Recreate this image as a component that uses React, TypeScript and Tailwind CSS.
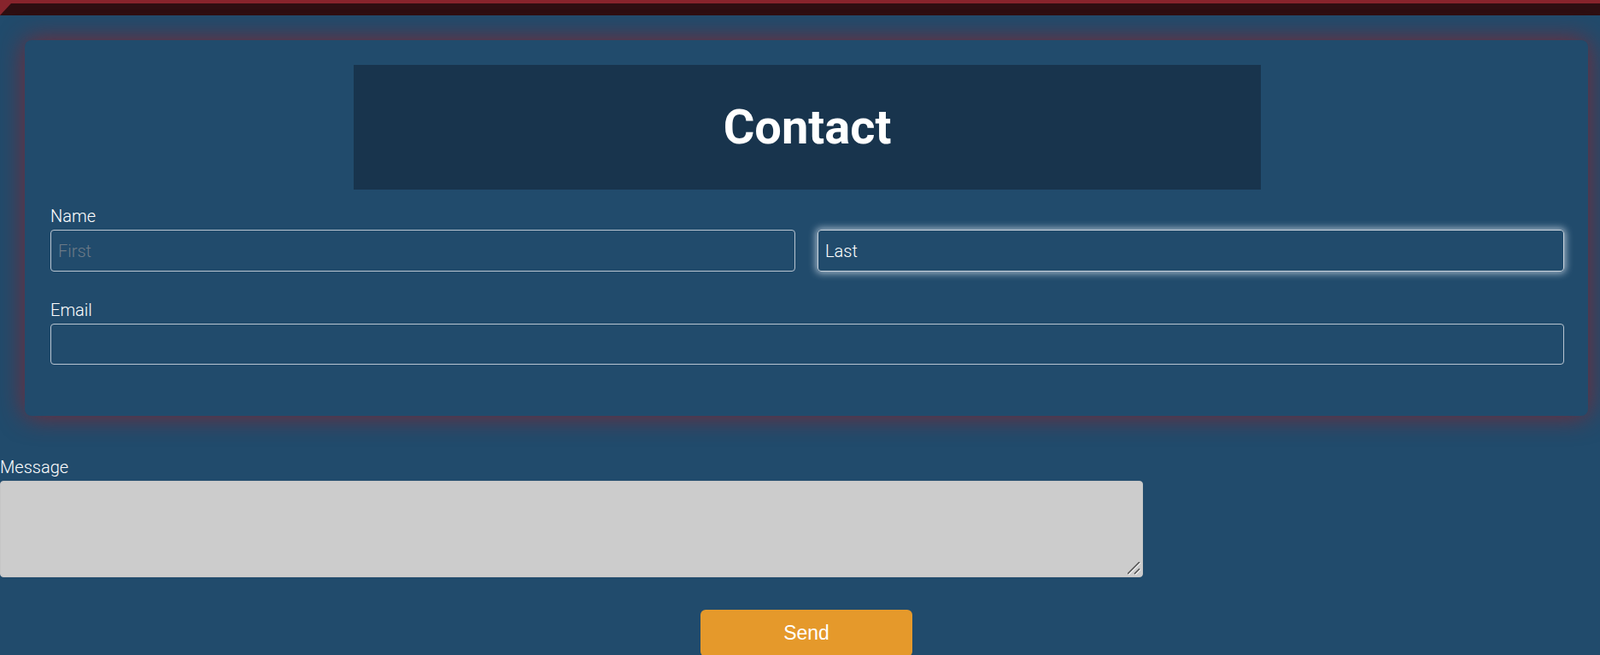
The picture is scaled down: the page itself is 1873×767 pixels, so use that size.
import React from "react";

export default function App() {
  return (
    <div
      className="min-h-[767px] w-full bg-[#214b6c] overflow-hidden"
      style={{ fontFamily: "Roboto, 'Liberation Sans', sans-serif" }}
    >
      {/* top bar */}
      <div className="h-0 w-full box-content border-t-[4px] border-l-[13px] border-b-[14px] border-solid border-t-[#87242c] border-l-[#87242c] border-b-[#2e0e11]" />

      {/* card */}
      <div className="ml-[29px] mr-[14px] mt-[29px] rounded-[8px] bg-[#214b6c] pl-[30px] pr-[28px] pt-[29px] pb-[60px] shadow-[0_0_30px_rgba(135,36,44,0.9)]">
        <div className="mx-auto flex h-[146px] w-[1062px] items-center justify-center bg-[#18344d]">
          <h1 className="text-[56px] font-bold leading-none text-white">Contact</h1>
        </div>

        <div className="mt-[20px]">
          <label className="block text-[20px] font-light leading-[23px] text-white">Name</label>
          <div className="mt-[4px] grid grid-cols-[872px_1fr] gap-[26px]">
            <input
              className="h-[49px] w-full rounded-[4px] border border-[#b9c5d1] bg-transparent px-[8px] text-[20px] font-light text-white outline-none placeholder:text-[#6c7a87]"
              placeholder="First"
            />
            <input
              className="h-[49px] w-full rounded-[4px] border border-[#c9d3dc] bg-transparent px-[8px] text-[20px] font-light text-white outline-none shadow-[0_0_8px_2px_rgba(220,230,240,0.7)]"
              defaultValue="Last"
            />
          </div>
        </div>

        <div className="mt-[34px]">
          <label className="block text-[20px] font-light leading-[23px] text-white">Email</label>
          <input className="mt-[4px] h-[48px] w-full rounded-[4px] border border-[#b9c5d1] bg-transparent px-[8px] text-[20px] font-light text-white outline-none" />
        </div>
      </div>

      {/* message */}
      <div className="mt-[49px]">
        <label className="block text-[20px] font-light leading-[23px] text-white">Message</label>
        <div className="relative mt-[4px] w-[1338px]">
          <textarea className="block h-[113px] w-full resize-none rounded-[4px] border border-[#c6c6c6] bg-[#cccccc] p-[8px] text-[18px] text-black outline-none" />
          <svg
            className="pointer-events-none absolute bottom-[2px] right-[2px]"
            width="16"
            height="16"
            viewBox="0 0 16 16"
          >
            <line x1="1" y1="15" x2="15" y2="1" stroke="#f2f2f2" strokeWidth="1.2" />
            <line x1="0" y1="14" x2="14" y2="0" stroke="#4a4a4a" strokeWidth="1.4" />
            <line x1="9" y1="15" x2="15" y2="9" stroke="#f2f2f2" strokeWidth="1.2" />
            <line x1="8" y1="14" x2="14" y2="8" stroke="#4a4a4a" strokeWidth="1.4" />
          </svg>
        </div>
      </div>

      <div className="mt-[38px] flex justify-center pl-[15px]">
        <button
          className="flex h-[55px] w-[248px] items-center justify-center rounded-[6px] bg-[#e5992b] text-[23px] text-white"
          style={{ fontFamily: "'Liberation Sans', Arial, sans-serif" }}
        >
          Send
        </button>
      </div>
    </div>
  );
}
